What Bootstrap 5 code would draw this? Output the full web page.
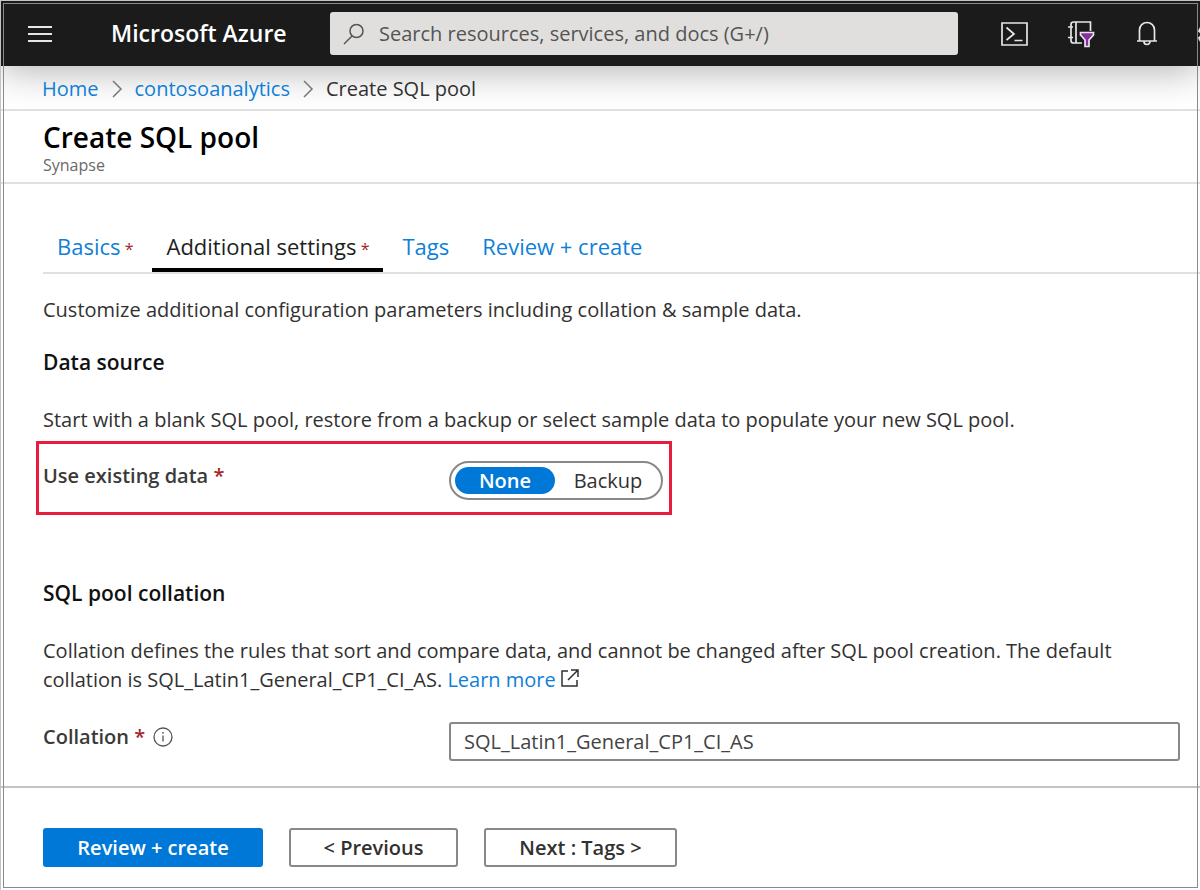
<!DOCTYPE html>
<html lang="en">
<head>
<meta charset="utf-8">
<meta name="viewport" content="width=device-width, initial-scale=1">
<title>Create SQL pool - Microsoft Azure</title>
<link href="https://cdn.jsdelivr.net/npm/bootstrap@5.3.0/dist/css/bootstrap.min.css" rel="stylesheet">
<style>
  body { font-family: "Open Sans", "Noto Sans", sans-serif; font-size: 20px; line-height: 29px; color: #323130; background: #fff; }
  a { color: #0f7fd8; text-decoration: none; }
  svg { display: block; flex: none; fill: none; stroke: currentColor; }
  .portal { min-height: 100vh; overflow: hidden; border: solid #c4c6c5; border-width: 1px 0 0 1px; }
  .frame-line { position: absolute; inset: 2px 2px 2px 2px; border: 1px solid #8a8a8a; pointer-events: none; z-index: 5; }
  .topbar { height: 65px; padding-left: 26px; background: #1b1b1b; color: #fff; box-shadow: 0 4px 38px rgba(0, 0, 0, .32); }
  .icon-btn { padding: 0; border: 0; background: none; color: #e6e6e6; }
  .brand { width: 192px; margin-left: 58px; font-size: 23px; font-weight: 600; color: #fff; white-space: nowrap; }
  .search-box { width: 628px; height: 43px; margin-left: 27px; padding: 0 13px; gap: 14px; border-radius: 3px; background: #e1dfdd; color: #555; }
  .search-box input { border: 0; padding: 0; background: none; color: #555; outline: 0; }
  .search-box input::placeholder { color: #555; opacity: 1; }
  .tools { margin-left: 43px; }
  .crumbs { height: 45px; padding: 2px 0 0 41px; border-bottom: 2px solid #e0e0e0; }
  .crumbs ol { gap: 11px; }
  .crumbs svg { color: #777; }
  .title-block { height: 73px; padding: 8px 0 0 42px; border-bottom: 2px solid #e0e0e0; }
  .title-block h1 { margin: 0; font-size: 28px; line-height: 36px; font-weight: 600; color: #000; }
  .title-block p { margin: 0; font-size: 16px; line-height: 20px; color: #6b6968; }
  .content-area { padding: 38px 20px 0 42px; }
  .tab-row { margin-right: -20px; border-bottom: 2px solid #e0e0e0; font-size: 22px; }
  .tab-row a { display: block; height: 50px; padding: 10px 14px 0; white-space: nowrap; border-bottom: 4px solid transparent; }
  .tab-row li + li { margin-left: 5px; }
  .tab-row a.active { color: #201f1e; border-color: #000; }
  .tab-row .req { font-size: 16px; }
  .req { color: #a4262c; }
  .intro { margin: 0 0 24px; padding-top: 21px; }
  h2 { margin: 0; font-size: 21px; line-height: 29px; font-weight: 600; color: #111; }
  .field-label { width: 406px; height: 29px; font-weight: 600; color: #3b3a39; }
  .field-label svg { color: #555; }
  .external { color: #323130; }
  .highlight { width: 636px; height: 74px; margin: 7px 0 0 -7px; padding: 17px 0 0 4px; border: 3px solid #e81c3c; }
  .pill-group { width: 214px; height: 39px; padding: 4px; border: 2px solid #8a8886; border-radius: 20px; }
  .pill-group label { flex: 0 0 100px; border-radius: 15px; text-align: center; line-height: 28px; cursor: pointer; }
  .pill-group label:last-child { flex: 1 0 106px; }
  .pill-group .btn-check:checked + label { background: #0078d7; color: #fff; font-weight: 600; }
  .text-field { height: 39px; padding: 0 13px; border: 2px solid #8a8886; border-radius: 3px; color: #444; }
  .actions { margin-top: 25px; padding: 40px 0 20px 42px; gap: 26px; border-top: 2px solid #c4c4c4; }
  .actions button { height: 39px; border: 2px solid #8a8886; border-radius: 3px; background: #fff; color: #323130; font-weight: 600; white-space: nowrap; }
  .actions .go { width: 220px; background: #0078d7; border-color: #0078d7; color: #fff; }
  .actions .prev { width: 169px; }
  .actions .next { width: 193px; }
</style>
</head>
<body>
<div class="portal position-relative">
  <div class="frame-line"></div>
  <header class="topbar d-flex align-items-center">
    <button class="icon-btn" aria-label="Menu"><svg width="26" height="18" viewBox="0 0 26 18" stroke-width="2"><path d="M1 2h24M1 9h24M1 16h24"/></svg></button>
    <a class="brand flex-shrink-0" href="#">Microsoft Azure</a>
    <div class="search-box d-flex align-items-center flex-shrink-0">
      <svg width="22" height="22" viewBox="0 0 22 22" stroke-width="1.500"><circle cx="13.500" cy="8" r="6.500"/><path d="M9 13l-8 8"/></svg>
      <input class="flex-grow-1" type="text" aria-label="Search" placeholder="Search resources, services, and docs (G+/)">
    </div>
    <div class="tools d-flex align-items-center">
      <button class="icon-btn" aria-label="Cloud Shell"><svg width="27" height="24" viewBox="0 0 27 24" stroke-width="1.700"><path d="M1 1h25v22H1zM5.500 5.500l7.500 6.500-7.500 6M13.500 18.500h8"/></svg></button>
      <button class="icon-btn ms-4" aria-label="Directories and subscriptions"><svg class="ms-3" width="28" height="28" viewBox="0 0 28 28" stroke-width="1.700"><path d="M22.500 11V2H5.500Q3 2 3 4.500V20.500Q3 23 5.500 23H14M8 2v21M0 7h5M0 17.500h5"/><path d="M12.500 12.500h13v2.500l-4.500 5v6.500h-4V20l-4.500-5z" fill="#8a2da5"/></svg></button>
      <button class="icon-btn ms-4" aria-label="Notifications"><svg class="ms-3" width="22" height="25" viewBox="0 0 22 25" stroke-width="1.700"><path d="M1 20h20M3.500 20V9a7.500 7.500 0 0 1 15 0v11M8 20.500a3 3 0 0 0 6 0"/></svg></button>
      <button class="icon-btn ms-4" aria-label="Settings"><svg class="ms-3" width="24" height="24" viewBox="0 0 24 24" stroke-width="1.700"><circle cx="12" cy="12" r="4"/><path d="M10 2h4l1 3 3 1 3-1 2 4-2 2v3l2 2-2 4-3-1-3 1-1 3h-4l-1-3-3-1-3 1-2-4 2-2v-3L1 9l2-4 3 1 3-1z"/></svg></button>
    </div>
  </header>

  <nav class="crumbs" aria-label="Breadcrumb">
    <ol class="list-unstyled d-flex align-items-center h-100 mb-0">
      <li><a href="#">Home</a></li>
      <li><svg width="14" height="18" viewBox="0 0 14 18" stroke-width="1.500"><path d="M3 1l8 8-8 8"/></svg></li>
      <li><a href="#">contosoanalytics</a></li>
      <li><svg width="14" height="18" viewBox="0 0 14 18" stroke-width="1.500"><path d="M3 1l8 8-8 8"/></svg></li>
      <li aria-current="page">Create SQL pool</li>
    </ol>
  </nav>

  <div class="title-block">
    <h1>Create SQL pool</h1>
    <p>Synapse</p>
  </div>

  <main class="content-area">
    <ul class="tab-row list-unstyled d-flex mb-0">
      <li><a href="#">Basics<span class="req"> *</span></a></li>
      <li><a class="active" href="#" aria-current="true">Additional settings<span class="req"> *</span></a></li>
      <li><a href="#">Tags</a></li>
      <li><a href="#">Review + create</a></li>
    </ul>
    <p class="intro">Customize additional configuration parameters including collation &amp; sample data.</p>
    <h2>Data source</h2>
    <p class="mb-0 mt-4 pt-1">Start with a blank SQL pool, restore from a backup or select sample data to populate your new SQL pool.</p>
    <div class="highlight d-flex align-items-start" role="radiogroup" aria-labelledby="existing">
      <span class="field-label flex-shrink-0" id="existing">Use existing data <span class="req">*</span></span>
      <div class="pill-group d-flex flex-shrink-0">
        <input class="btn-check" type="radio" name="source" id="none" checked><label for="none">None</label>
        <input class="btn-check" type="radio" name="source" id="backup"><label for="backup">Backup</label>
      </div>
    </div>
    <h2 class="mt-5 pt-3">SQL pool collation</h2>
    <p class="mb-0 mt-4 pt-1">Collation defines the rules that sort and compare data, and cannot be changed after SQL pool creation. The default collation is SQL_Latin1_General_CP1_CI_AS. <a href="#">Learn more</a> <svg class="external d-inline-block align-baseline" width="18" height="18" viewBox="0 0 18 18" stroke-width="1.500"><path d="M7 2H1v15h15v-6M10 1h7v7M17 1L7 11"/></svg></p>
    <div class="d-flex mt-4 pt-1">
      <div class="field-label d-flex align-items-center flex-shrink-0 gap-2">
        <label for="collation">Collation <span class="req">*</span></label>
        <svg width="20" height="20" viewBox="0 0 20 20" stroke-width="1.300"><circle cx="10" cy="10" r="9"/><path d="M10 8.500v6M10 5v1.800"/></svg>
      </div>
      <input class="text-field flex-grow-1" type="text" id="collation" value="SQL_Latin1_General_CP1_CI_AS">
    </div>
  </main>

  <footer class="actions d-flex">
    <button class="go">Review + create</button>
    <button class="prev">&lt; Previous</button>
    <button class="next">Next : Tags &gt;</button>
  </footer>
</div>
<script src="https://cdn.jsdelivr.net/npm/bootstrap@5.3.0/dist/js/bootstrap.bundle.min.js"></script>
</body>
</html>
